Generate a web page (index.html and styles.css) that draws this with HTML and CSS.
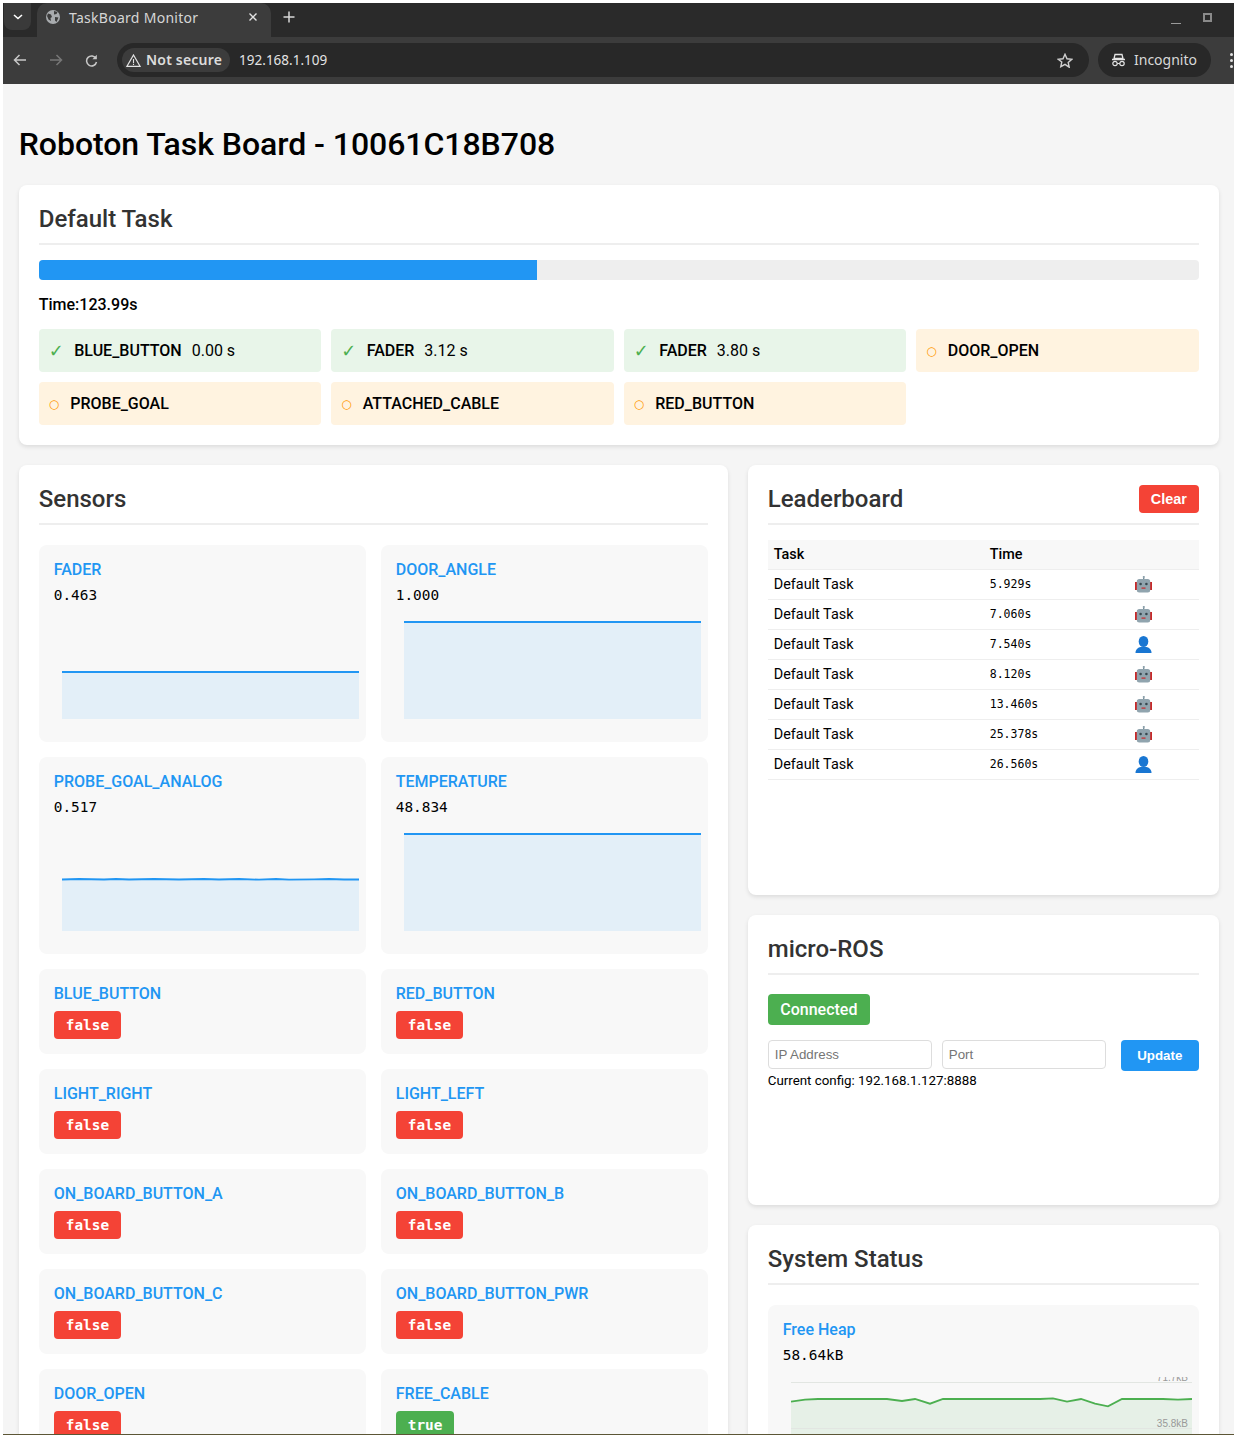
FILE: index.html
```html
<!DOCTYPE html>
<html lang="en">
<head>
<meta charset="UTF-8" />
<meta name="viewport" content="width=device-width, initial-scale=1.0">
<title>TaskBoard Monitor</title>
<link rel="stylesheet" href="styles.css">
</head>
<body>
<svg class="defs" width="0" height="0">
  <symbol id="robot" viewBox="0 0 17 17">
    <rect x="8" y="0" width="1.4" height="3" fill="#78909c"/>
    <circle cx="8.7" cy="1" r="1" fill="#90a4ae"/>
    <rect x="0" y="6" width="2.4" height="8" fill="#c62828"/>
    <rect x="14.6" y="6" width="2.4" height="8" fill="#c62828"/>
    <rect x="1.8" y="3" width="13.4" height="13.4" rx="2.5" fill="#90a4ae"/>
    <circle cx="5.6" cy="8" r="1.3" fill="#37474f"/>
    <circle cx="11.4" cy="8" r="1.3" fill="#37474f"/>
    <rect x="6.5" y="11.5" width="4" height="1.2" fill="#c62828"/>
  </symbol>
  <symbol id="person" viewBox="0 0 16 17">
    <ellipse cx="8" cy="5.5" rx="4.8" ry="5.5" fill="#1976d2"/>
    <path d="M0 17c0-4 3-5.500 5-6h6c2 .5 5 2 5 6z" fill="#1976d2"/>
  </symbol>
</svg>

<div class="screen">
  <!-- browser chrome -->
  <header class="chrome">
    <div class="tabstrip">
      <div class="tab-menu">
        <svg width="10" height="6" viewBox="0 0 10 6"><path d="M1 1l4 3.500 4-3.500" fill="none" stroke="#fff" stroke-width="1.600"/></svg>
      </div>
      <div class="tab">
        <svg class="globe" width="14" height="14" viewBox="0 0 14 14"><circle cx="7" cy="7" r="7" fill="#a8abae"/><path d="M2 3.500l3 1 1 2.500-1.500 1L5 11 2.500 9.500 1 6zM8 1l3.500 1-1 2-2.500.5zM9 7l3.500.5L10.500 12 9 10.500z" fill="#3c3c3c"/></svg>
        <span class="tab-title">TaskBoard Monitor</span>
        <svg width="10" height="10" viewBox="0 0 10 10"><path d="M1.500 1.500l7 7M8.500 1.500l-7 7" stroke="#e3e3e3" stroke-width="1.400"/></svg>
      </div>
      <svg class="new-tab" width="12" height="12" viewBox="0 0 12 12"><path d="M6 .5v11M.5 6h11" stroke="#d8d8d8" stroke-width="1.500"/></svg>
      <div class="win-controls">
        <span class="win-min"></span>
        <span class="win-max"></span>
      </div>
    </div>
    <div class="toolbar">
      <svg class="nav-btn" width="14" height="12" viewBox="0 0 14 12"><path d="M13 6H2M6.500 1L1.500 6l5 5" fill="none" stroke="#c8c8c8" stroke-width="1.500"/></svg>
      <svg class="nav-btn" width="14" height="12" viewBox="0 0 14 12"><path d="M1 6h11M7.500 1l5 5-5 5" fill="none" stroke="#777" stroke-width="1.500"/></svg>
      <svg class="nav-btn" width="13" height="13" viewBox="0 0 13 13"><path d="M11 4.500A5 5 0 1 0 11.500 8" fill="none" stroke="#c8c8c8" stroke-width="1.500"/><path d="M11.800 .8v4.400H7.400z" fill="#c8c8c8"/></svg>
      <div class="omnibox">
        <div class="not-secure">
          <svg width="15" height="13" viewBox="0 0 15 13"><path d="M7.500 1L14 12.300H1z" fill="none" stroke="#e3e3e3" stroke-width="1.200"/><path d="M7.500 5v4M7.500 9.800v1.200" stroke="#e3e3e3" stroke-width="1.100"/></svg>
          <span>Not secure</span>
        </div>
        <span class="url">192.168.1.109</span>
        <svg class="star" width="16" height="15" viewBox="0 0 16 15"><path d="M8 1.300l2 4.500 4.800.5-3.600 3.200 1 4.700L8 11.300l-4.200 2.400 1-4.700L1.200 6.300 6 5.800z" fill="none" stroke="#d0d0d0" stroke-width="1.400"/></svg>
      </div>
      <div class="incognito">
        <svg width="15" height="14" viewBox="0 0 15 14"><path d="M4 1.500h7l1 4H3zM1 6.500h13" fill="none" stroke="#e3e3e3" stroke-width="1.300"/><circle cx="4" cy="10.500" r="2.200" fill="none" stroke="#e3e3e3" stroke-width="1.200"/><circle cx="11" cy="10.500" r="2.200" fill="none" stroke="#e3e3e3" stroke-width="1.200"/><path d="M6.200 10.500h2.600" stroke="#e3e3e3"/></svg>
        <span>Incognito</span>
      </div>
      <div class="kebab"><i></i><i></i><i></i></div>
    </div>
  </header>

  <main class="page">
    <h1>Roboton Task Board - 10061C18B708</h1>

    <section class="card">
      <h2 class="card-title">Default Task</h2>
      <div class="progress"><div class="progress-fill"></div></div>
      <div class="time">Time:123.99s</div>
      <div class="tasks">
        <div class="task done"><span class="task-icon">✓</span><b>BLUE_BUTTON</b><span class="task-time">0.00 s</span></div>
        <div class="task done"><span class="task-icon">✓</span><b>FADER</b><span class="task-time">3.12 s</span></div>
        <div class="task done"><span class="task-icon">✓</span><b>FADER</b><span class="task-time">3.80 s</span></div>
        <div class="task todo"><span class="task-icon">○</span><b>DOOR_OPEN</b></div>
        <div class="task todo"><span class="task-icon">○</span><b>PROBE_GOAL</b></div>
        <div class="task todo"><span class="task-icon">○</span><b>ATTACHED_CABLE</b></div>
        <div class="task todo"><span class="task-icon">○</span><b>RED_BUTTON</b></div>
      </div>
    </section>

    <div class="columns">
      <section class="card">
        <h2 class="card-title">Sensors</h2>
        <div class="sensors">
          <div class="tile">
            <div class="tile-name">FADER</div>
            <div class="tile-value">0.463</div>
            <svg class="chart" viewBox="0 0 312 115"><path d="M8 60H305V107H8z" fill="#e3eff8"/><path d="M8 60H305" class="line"/></svg>
          </div>
          <div class="tile">
            <div class="tile-name">DOOR_ANGLE</div>
            <div class="tile-value">1.000</div>
            <svg class="chart" viewBox="0 0 312 115"><path d="M8 10H305V107H8z" fill="#e3eff8"/><path d="M8 10H305" class="line"/></svg>
          </div>
          <div class="tile">
            <div class="tile-name">PROBE_GOAL_ANALOG</div>
            <div class="tile-value">0.517</div>
            <svg class="chart" viewBox="0 0 312 115"><path d="M8 55.500L25 55L50 55.500L62 55L75 55.500L100 55L125 55.500L150 55L165 55.500L185 55L205 55.700L222 55L235 55.700L260 55.300L275 55L290 55.500L305 55.500V107H8z" fill="#e3eff8"/><path d="M8 55.500L25 55L50 55.500L62 55L75 55.500L100 55L125 55.500L150 55L165 55.500L185 55L205 55.700L222 55L235 55.700L260 55.300L275 55L290 55.500L305 55.500" class="line"/></svg>
          </div>
          <div class="tile">
            <div class="tile-name">TEMPERATURE</div>
            <div class="tile-value">48.834</div>
            <svg class="chart" viewBox="0 0 312 115"><path d="M8 10H305V107H8z" fill="#e3eff8"/><path d="M8 10H305" class="line"/></svg>
          </div>
          <div class="tile"><div class="tile-name">BLUE_BUTTON</div><span class="bool off">false</span></div>
          <div class="tile"><div class="tile-name">RED_BUTTON</div><span class="bool off">false</span></div>
          <div class="tile"><div class="tile-name">LIGHT_RIGHT</div><span class="bool off">false</span></div>
          <div class="tile"><div class="tile-name">LIGHT_LEFT</div><span class="bool off">false</span></div>
          <div class="tile"><div class="tile-name">ON_BOARD_BUTTON_A</div><span class="bool off">false</span></div>
          <div class="tile"><div class="tile-name">ON_BOARD_BUTTON_B</div><span class="bool off">false</span></div>
          <div class="tile"><div class="tile-name">ON_BOARD_BUTTON_C</div><span class="bool off">false</span></div>
          <div class="tile"><div class="tile-name">ON_BOARD_BUTTON_PWR</div><span class="bool off">false</span></div>
          <div class="tile"><div class="tile-name">DOOR_OPEN</div><span class="bool off">false</span></div>
          <div class="tile"><div class="tile-name">FREE_CABLE</div><span class="bool on">true</span></div>
        </div>
      </section>

      <div class="side">
        <section class="card leaderboard">
          <div class="card-head">
            <h2>Leaderboard</h2>
            <button class="btn btn-red">Clear</button>
          </div>
          <table class="scores">
            <thead><tr><th class="col-task">Task</th><th class="col-time">Time</th><th></th></tr></thead>
            <tbody>
              <tr><td>Default Task</td><td class="mono">5.929s</td><td><svg class="who"><use href="#robot"/></svg></td></tr>
              <tr><td>Default Task</td><td class="mono">7.060s</td><td><svg class="who"><use href="#robot"/></svg></td></tr>
              <tr><td>Default Task</td><td class="mono">7.540s</td><td><svg class="who"><use href="#person"/></svg></td></tr>
              <tr><td>Default Task</td><td class="mono">8.120s</td><td><svg class="who"><use href="#robot"/></svg></td></tr>
              <tr><td>Default Task</td><td class="mono">13.460s</td><td><svg class="who"><use href="#robot"/></svg></td></tr>
              <tr><td>Default Task</td><td class="mono">25.378s</td><td><svg class="who"><use href="#robot"/></svg></td></tr>
              <tr><td>Default Task</td><td class="mono">26.560s</td><td><svg class="who"><use href="#person"/></svg></td></tr>
            </tbody>
          </table>
        </section>

        <section class="card microros">
          <h2 class="card-title">micro-ROS</h2>
          <div class="status">Connected</div>
          <div class="config-row">
            <input type="text" placeholder="IP Address">
            <input type="text" placeholder="Port">
            <button class="btn btn-blue">Update</button>
          </div>
          <div class="config-now">Current config: 192.168.1.127:8888</div>
        </section>

        <section class="card">
          <h2 class="card-title">System Status</h2>
          <div class="tile">
            <div class="tile-name">Free Heap</div>
            <div class="tile-value">58.64kB</div>
            <svg class="chart heap" viewBox="0 0 416 115">
              <path d="M8 24.700L22 22.700L35 22H104L119 24L132 22L147 26.700L160 22H257L270 21.300L284 24.700L298 22L312 26.700L325 29.300L339 22H380L395 22.700L409 22V115H8z" fill="#e6f0e7"/>
              <path d="M8 5.500H409M8 51.500H409" stroke="#e2e6e2" stroke-width="1"/>
              <text x="405" y="4" text-anchor="end" class="chart-label">71.7kB</text>
              <text x="405" y="50" text-anchor="end" class="chart-label">35.8kB</text>
              <path d="M8 24.700L22 22.700L35 22H104L119 24L132 22L147 26.700L160 22H257L270 21.300L284 24.700L298 22L312 26.700L325 29.300L339 22H380L395 22.700L409 22" class="line green"/>
            </svg>
          </div>
        </section>
      </div>
    </div>
  </main>
</div>
</body>
</html>
```

FILE: styles.css
```css
:root{
  --blue:#2196f3;
  --red:#f44336;
  --green:#4caf50;
  --tile:#f8f8f8;
  --rule:#eee;
}
*,*::before,*::after{box-sizing:border-box}
html,body{margin:0;padding:0;background:#fff;overflow:hidden}
body{height:1438px;font-family:Roboto,"Liberation Sans",sans-serif;color:#000}
.defs{position:absolute}

/* ventana recortada como en la captura */
.screen{
  width:1231px;height:1432px;margin:3px 3px 0;
  background:#f5f5f5;
  overflow:hidden;
  border-bottom:1px solid #5c5636;
}

/* BROWSER CHROME */
.chrome{font-family:"Noto Sans","Open Sans",sans-serif;color:#e3e3e3;font-size:14px}
.tabstrip{display:flex;align-items:center;height:34px;background:#2a2a2a}
.tab-menu{
  display:flex;align-items:center;justify-content:center;
  width:27px;height:27px;margin:0 0 7px 1px;
  background:#3a3a3a;border-radius:0 0 8px 8px;
}
.tab{
  display:flex;align-items:center;
  width:234px;height:34px;margin-left:6px;padding:0 13px 6px 9px;
  background:#3c3c3c;border-radius:10px 10px 0 0;
}
.tab-title{flex:1;margin-left:9px;font-size:14px;letter-spacing:.28px;color:#d6d6d6;white-space:nowrap}
.new-tab{margin:0 0 6px 12px}
.win-controls{display:flex;align-items:center;margin-left:auto;margin-right:22px;gap:22px}
.win-min{width:10px;height:1px;margin-top:7px;background:#9a9a9a}
.win-max{width:9px;height:9px;border:2px solid #8a8a8a;margin-top:-6px}
.toolbar{display:flex;align-items:center;height:47px;padding:0 0 1px 10px;background:#3c3c3c}
.nav-btn{margin-right:22px;flex:none}
.nav-btn:nth-child(3){margin-right:19px}
.omnibox{
  display:flex;align-items:center;
  width:972px;height:34px;padding:0 16px 0 5px;
  background:#282828;border-radius:17px;
}
.not-secure{
  display:flex;align-items:center;gap:5px;
  height:24px;padding:0 8px 0 4px;
  background:#3c3c3c;border-radius:12px;
  font-weight:600;font-size:14px;letter-spacing:.2px;color:#dcdcdc;
}
.not-secure span,.incognito span{margin-top:-2px}
.url{margin-left:9px;font-size:13.500px;color:#e3e3e3}
.star{margin-left:auto}
.incognito{
  display:flex;align-items:center;gap:8px;
  width:113px;height:34px;margin-left:9px;padding-left:13px;
  background:#282828;border-radius:17px;color:#d8d8d8;
}
.kebab{display:flex;flex-direction:column;gap:3px;margin-left:19px}
.kebab i{width:3px;height:3px;background:#e3e3e3;border-radius:50%}

/* PAGE */
.page{padding:21px 15.250px 0 15.750px}
h1{margin:21.440px 0;font-size:32px;line-height:37.500px;font-weight:500;letter-spacing:-.05px}
.card{
  padding:20px;
  background:#fff;border-radius:8px;
  box-shadow:0 2px 4px rgba(0,0,0,.1);
}
.card-title,.card-head{
  margin:0 0 15px;padding-bottom:10px;
  border-bottom:2px solid var(--rule);
}
h2{margin:0;font-size:24px;line-height:28px;font-weight:500;color:#333}
.card-head{display:flex;align-items:flex-start;justify-content:space-between}
.card-title{font-size:24px;line-height:28px;font-weight:500;color:#333}

.progress{height:20px;background:var(--rule);border-radius:4px;overflow:hidden}
.progress-fill{width:42.950%;height:100%;background:var(--blue)}
.time{margin-top:15px;font-size:16px;line-height:19px;font-weight:500}
.tasks{display:grid;grid-template-columns:repeat(4,1fr);gap:10px;margin-top:15px}
.task{
  display:flex;align-items:center;
  height:43px;padding:0 10px;
  border-radius:4px;font-size:16px;
}
.task b{font-weight:500}
.task-icon{margin-right:10.400px;font-family:"DejaVu Sans",sans-serif;font-size:18px}
.task-time{margin-left:10px}
.done{background:#e8f5e9}
.done .task-icon{color:var(--green)}
.todo{background:#fff3e0}
.todo .task-icon{margin-right:11px;color:#ff9800;font-size:12px}

.columns{display:grid;grid-template-columns:709.700fr 470.300fr;gap:20px;margin-top:20px}
.side{display:flex;flex-direction:column;gap:20px}
.leaderboard{height:430px}
.microros{height:290px}

/* SENSORS */
.sensors{display:grid;grid-template-columns:1fr 1fr;gap:15px;margin-top:20px}
.tile{padding:15px;background:var(--tile);border-radius:8px}
.side .tile{margin-top:20px}
.tile-name{margin-bottom:8px;font-size:16px;line-height:19px;font-weight:500;color:var(--blue)}
.tile-value{font-family:"DejaVu Sans Mono",monospace;font-size:14.400px;line-height:16px;color:#000}
.chart{display:block;width:calc(100% + 15px);height:115px;margin-top:9px;overflow:hidden}
.chart.heap{margin-top:14px}
.line{fill:none;stroke:var(--blue);stroke-width:1.800}
.line.green{stroke:var(--green)}
.chart-label{font-family:"Liberation Sans",sans-serif;font-size:10px;fill:#999}
.bool{
  display:inline-block;height:28px;padding:0 12px;
  font-family:"DejaVu Sans Mono",monospace;font-weight:700;font-size:14.400px;line-height:28px;
  color:#fff;border-radius:4px;
}
.off{background:var(--red)}
.on{background:var(--green)}

/* LEADERBOARD */
.btn{
  border:0;border-radius:4px;color:#fff;
  font-family:"Liberation Sans",sans-serif;font-weight:700;font-size:14.400px;
}
.btn-red{width:60px;height:28px;background:var(--red)}
.btn-blue{width:78px;height:31px;margin-left:15px;background:var(--blue);font-size:13.333px}
.scores{width:100%;border-collapse:collapse;table-layout:fixed;font-size:14.400px}
.scores th,.scores td{height:30px;padding:0 6px;text-align:left;border-bottom:1px solid var(--rule)}
.scores th{height:29px;background:var(--tile);font-weight:500}
.col-task{width:216px}
.col-time{width:145px}
.scores .mono{font-family:"DejaVu Sans Mono",monospace;font-size:11.520px}
.who{display:block;width:17px;height:17px}

/* MICRO-ROS */
.status{
  display:inline-block;margin-top:4px;padding:6px 12.500px;
  background:var(--green);color:#fff;border-radius:4px;
  font-size:16px;line-height:19px;font-weight:500;
}
.config-row{display:flex;align-items:flex-start;gap:10px;margin-top:15px}
.config-row input{
  width:164px;height:29px;padding:0 6px;
  border:1px solid #ddd;border-radius:4px;background:#fff;
  font-family:"Liberation Sans",sans-serif;font-size:13.333px;
}
.config-row input::placeholder{color:#757575}
.config-row .btn-blue{margin-left:5px}
.config-now{margin-top:2px;font-size:13.333px;line-height:15px}
```
